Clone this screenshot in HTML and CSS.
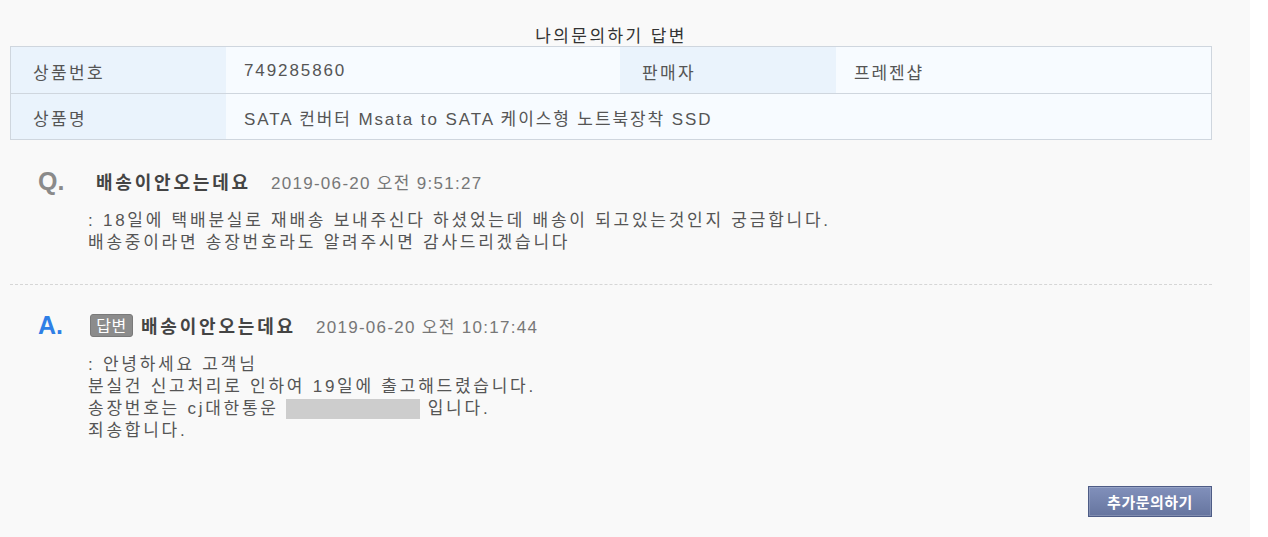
FILE: index.html
```html
<!DOCTYPE html>
<html lang="ko">
<head>
<meta charset="utf-8">
<title>나의문의하기 답변</title>
<link rel="stylesheet" href="styles.css">
</head>
<body>
<div class="page">
  <div class="wrap">
    <h1 class="title">나의문의하기 답변</h1>
    <div class="info">
      <div class="cell label">상품번호</div>
      <div class="cell value">749285860</div>
      <div class="cell label">판매자</div>
      <div class="cell value">프레젠샵</div>
      <div class="cell label row2">상품명</div>
      <div class="cell value row2 span3">SATA 컨버터 Msata to SATA 케이스형 노트북장착 SSD</div>
    </div>

    <div class="qa q">
      <div class="qa-head">
        <span class="mark mark-q">Q.</span>
        <span class="subject subject-q">배송이안오는데요</span>
        <span class="date">2019-06-20 오전 9:51:27</span>
      </div>
      <div class="qa-body">
        <p>: 18일에 택배분실로 재배송 보내주신다 하셨었는데 배송이 되고있는것인지 궁금합니다.</p>
        <p>배송중이라면 송장번호라도 알려주시면 감사드리겠습니다</p>
      </div>
    </div>

    <div class="divider"></div>

    <div class="qa a">
      <div class="qa-head">
        <span class="mark mark-a">A.</span>
        <span class="badge">답변</span>
        <span class="subject">배송이안오는데요</span>
        <span class="date">2019-06-20 오전 10:17:44</span>
      </div>
      <div class="qa-body">
        <p>: 안녕하세요 고객님</p>
        <p>분실건 신고처리로 인하여 19일에 출고해드렸습니다.</p>
        <p>송장번호는 cj대한통운 <span class="redact"></span> 입니다.</p>
        <p>죄송합니다.</p>
      </div>
    </div>

    <div class="actions">
      <button class="btn" type="button">추가문의하기</button>
    </div>
  </div>
</div>
</body>
</html>
```
FILE: styles.css
```css
html, body {
  margin: 0;
  padding: 0;
  background: #ffffff;
}
body {
  font-family: "Liberation Sans", "Noto Sans CJK KR", sans-serif;
  color: #555555;
}
.page {
  width: 1250px;
  min-height: 537px;
  background: #f9f9f9;
}
.wrap {
  width: 1202px;
  padding: 0 0 0 10px;
}
.title {
  margin: 0;
  padding-top: 27px;
  height: 19px;
  font-size: 17px;
  line-height: 19px;
  font-weight: normal;
  text-align: center;
  color: #333333;
  letter-spacing: 2.4px;
}
.info {
  display: grid;
  grid-template-columns: 215px 394px 216px 1fr;
  grid-auto-rows: 46px;
  border: 1px solid #cfd6de;
  background: #f7fbff;
}
.cell {
  display: flex;
  align-items: center;
  padding-top: 2px;
  box-sizing: border-box;
  font-size: 17px;
  letter-spacing: 1.9px;
  color: #555555;
}
.label {
  background: #eaf3fc;
  padding-left: 22px;
  letter-spacing: 2.4px;
}
.value {
  padding-left: 18px;
  background: #f7fbff;
}
.row2 {
  border-top: 1px solid #cfd6de;
}
.span3 {
  grid-column: span 3;
}
.qa-head {
  display: flex;
  align-items: center;
  height: 24px;
  padding-left: 28px;
}
.q .qa-head {
  margin-top: 29px;
}
.a .qa-head {
  margin-top: 28px;
}
.mark {
  display: inline-block;
  width: 52px;
  font-size: 25px;
  font-weight: bold;
  font-family: "Liberation Sans", sans-serif;
  letter-spacing: 0;
}
.mark-q {
  color: #8a8a8a;
}
.mark-a {
  color: #2f7fe6;
}
.subject {
  font-size: 18px;
  font-weight: bold;
  color: #444444;
  letter-spacing: 2.8px;
}
.subject-q {
  padding-left: 6px;
}
.badge {
  display: inline-flex;
  align-items: center;
  justify-content: center;
  width: 43px;
  height: 23px;
  margin-right: 8px;
  background: #8c8c8c;
  border: 1px solid #7a7a7a;
  box-sizing: border-box;
  border-radius: 3px;
  color: #ffffff;
  font-size: 16px;
  letter-spacing: 0.5px;
}
.date {
  margin-left: 20px;
  font-size: 17px;
  color: #777777;
  letter-spacing: 1.3px;
}
.qa-body {
  padding-left: 78px;
  font-size: 17px;
  line-height: 22px;
  letter-spacing: 2.75px;
  color: #555555;
}
.q .qa-body {
  margin-top: 17px;
}
.a .qa-body {
  margin-top: 17px;
}
.qa-body p {
  margin: 0;
}
.redact {
  display: inline-block;
  width: 134px;
  height: 20px;
  background: #cdcdcd;
  vertical-align: -5px;
  margin-right: 0;
}
.divider {
  margin-top: 30px;
  border-top: 1px dashed #d6d6d6;
}
.actions {
  display: flex;
  justify-content: flex-end;
  margin-top: 44px;
}
.btn {
  width: 124px;
  height: 31px;
  padding: 0;
  border: 1px solid #4e5c86;
  background: linear-gradient(#8190bb, #66759f);
  box-shadow: inset 0 0 0 1px rgba(255, 255, 255, 0.18);
  color: #ffffff;
  font-family: "Noto Sans CJK KR", sans-serif;
  font-size: 15px;
  font-weight: bold;
  letter-spacing: 0.5px;
  cursor: pointer;
}
```
